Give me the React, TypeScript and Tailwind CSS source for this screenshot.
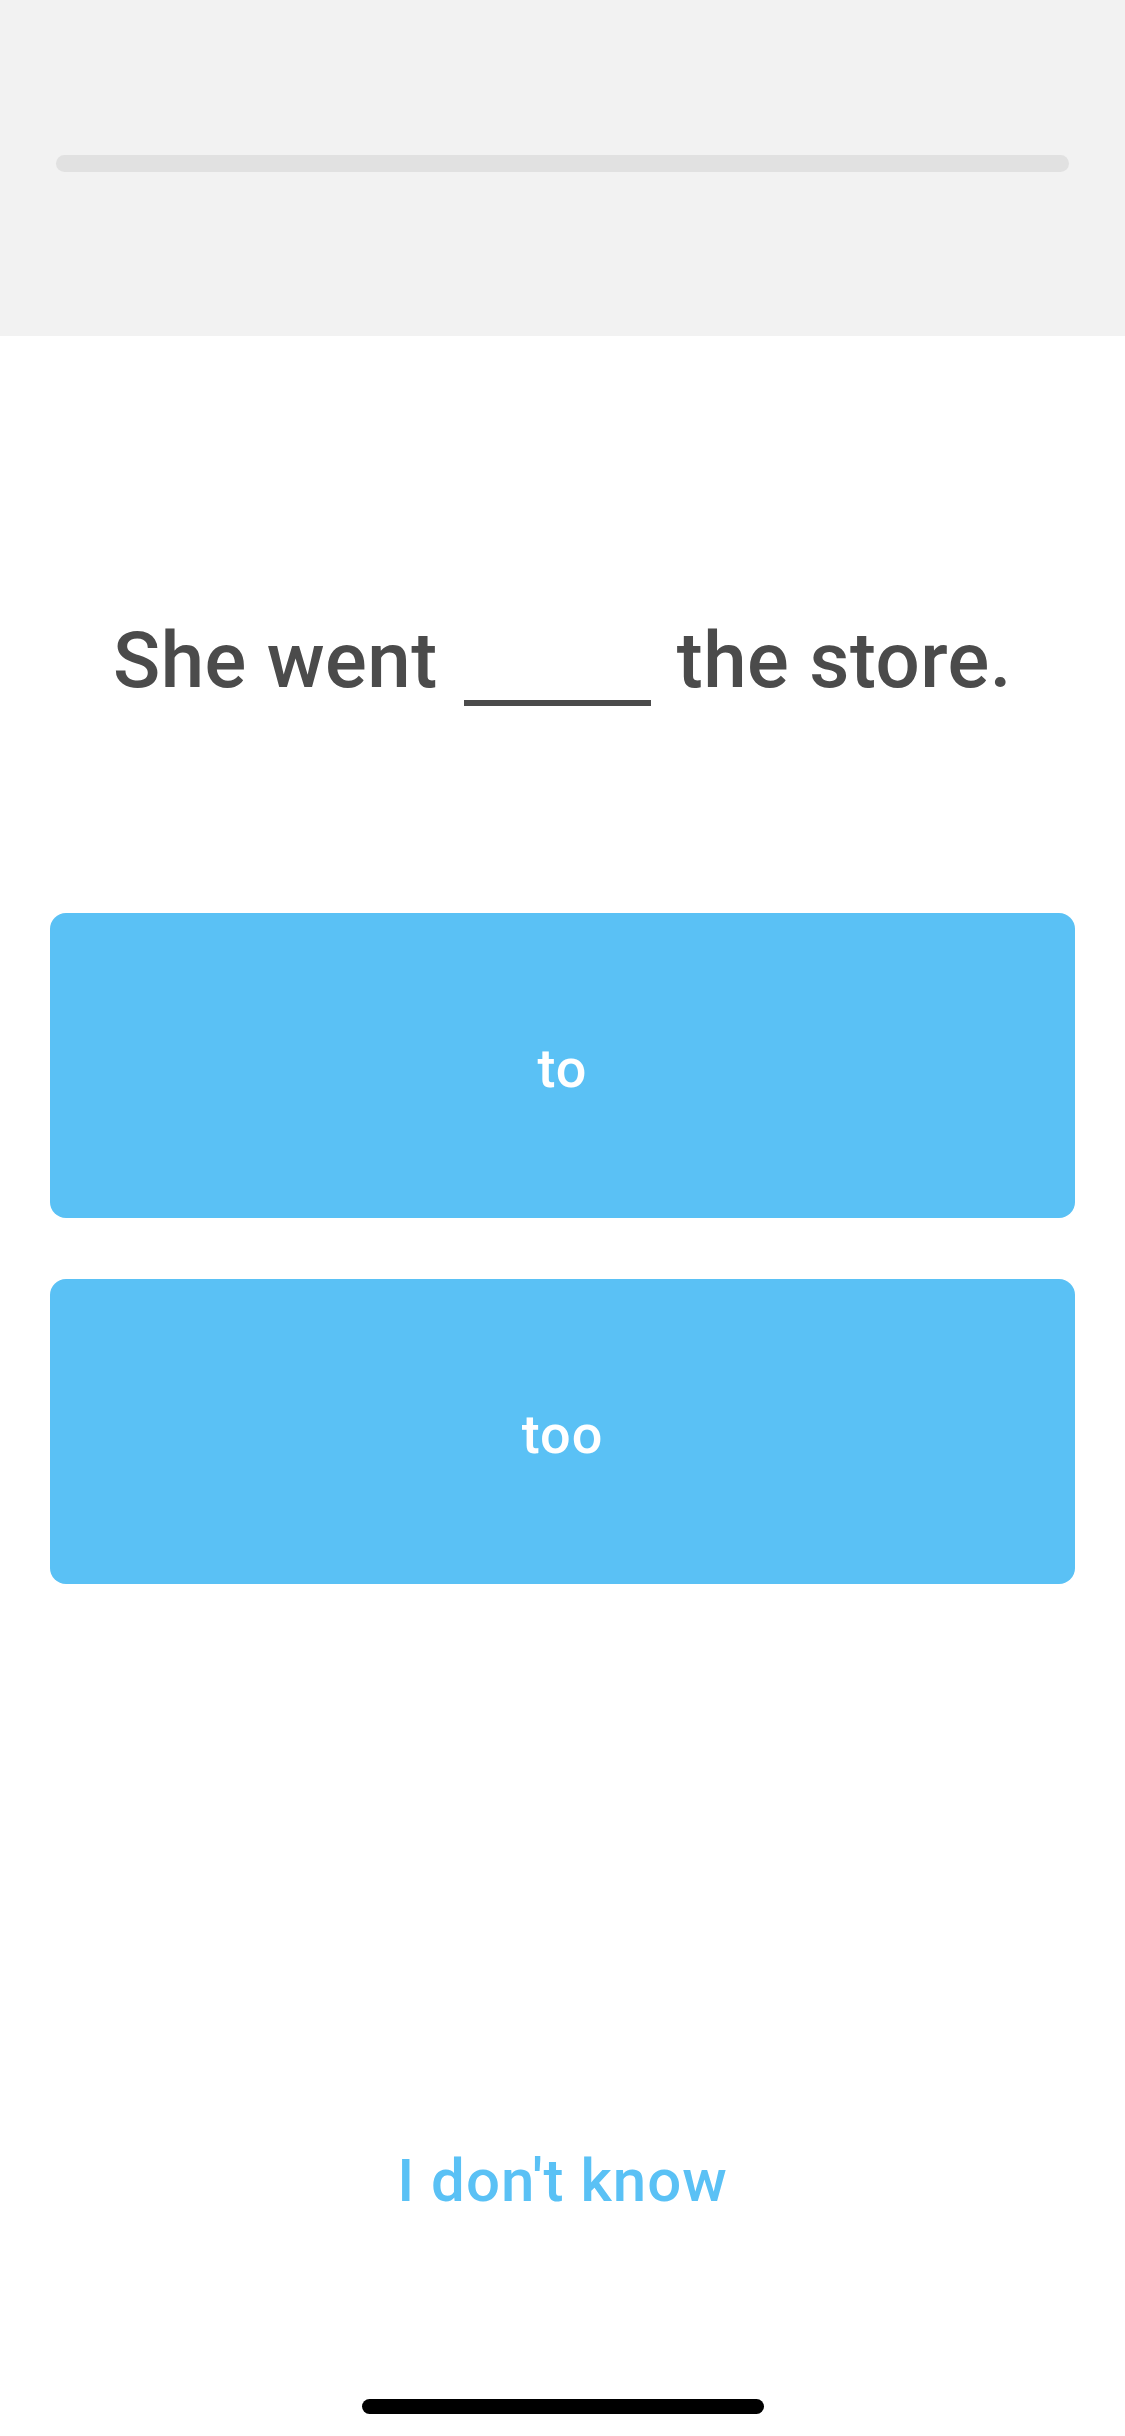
import React from 'react';

const options = ['to', 'too'];

export default function App() {
  return (
    <div
      className="w-[1125px] h-[2436px] bg-white flex flex-col"
      style={{ fontFamily: 'Roboto, "Noto Sans", sans-serif' }}
    >
      {/* Progress header */}
      <header className="h-[336px] bg-[#f2f2f2] pt-[155px] px-[56px] shrink-0">
        <div className="h-[17px] w-full rounded-full bg-[#e1e1e1]" />
      </header>

      {/* Question */}
      <div className="pt-[275px] flex justify-center items-baseline text-[#4b4b4b] text-[78px] leading-[100px] font-medium tracking-[0.5px]">
        <span>She went</span>
        <span className="inline-block w-[187px] mx-[26px] border-b-[6px] border-[#4b4b4b] translate-y-[19px]" />
        <span>the store.</span>
      </div>

      {/* Answer options */}
      <div className="mt-[202px] px-[50px] flex flex-col gap-[61px]">
        {options.map((opt) => (
          <button
            key={opt}
            className="h-[305px] w-full rounded-[16px] bg-[#5ac1f5] text-white text-[54px] font-medium tracking-[1px] pt-[6px] flex items-center justify-center"
          >
            {opt}
          </button>
        ))}
      </div>

      <div className="flex-1" />

      {/* Skip */}
      <div className="flex justify-center pb-[178px]">
        <button className="text-[#5ac1f5] text-[60px] leading-[80px] font-medium tracking-[1px]">
          I don't know
        </button>
      </div>

      {/* Home indicator */}
      <div className="flex justify-center pb-[22px]">
        <div className="w-[402px] h-[15px] rounded-full bg-black" />
      </div>
    </div>
  );
}
